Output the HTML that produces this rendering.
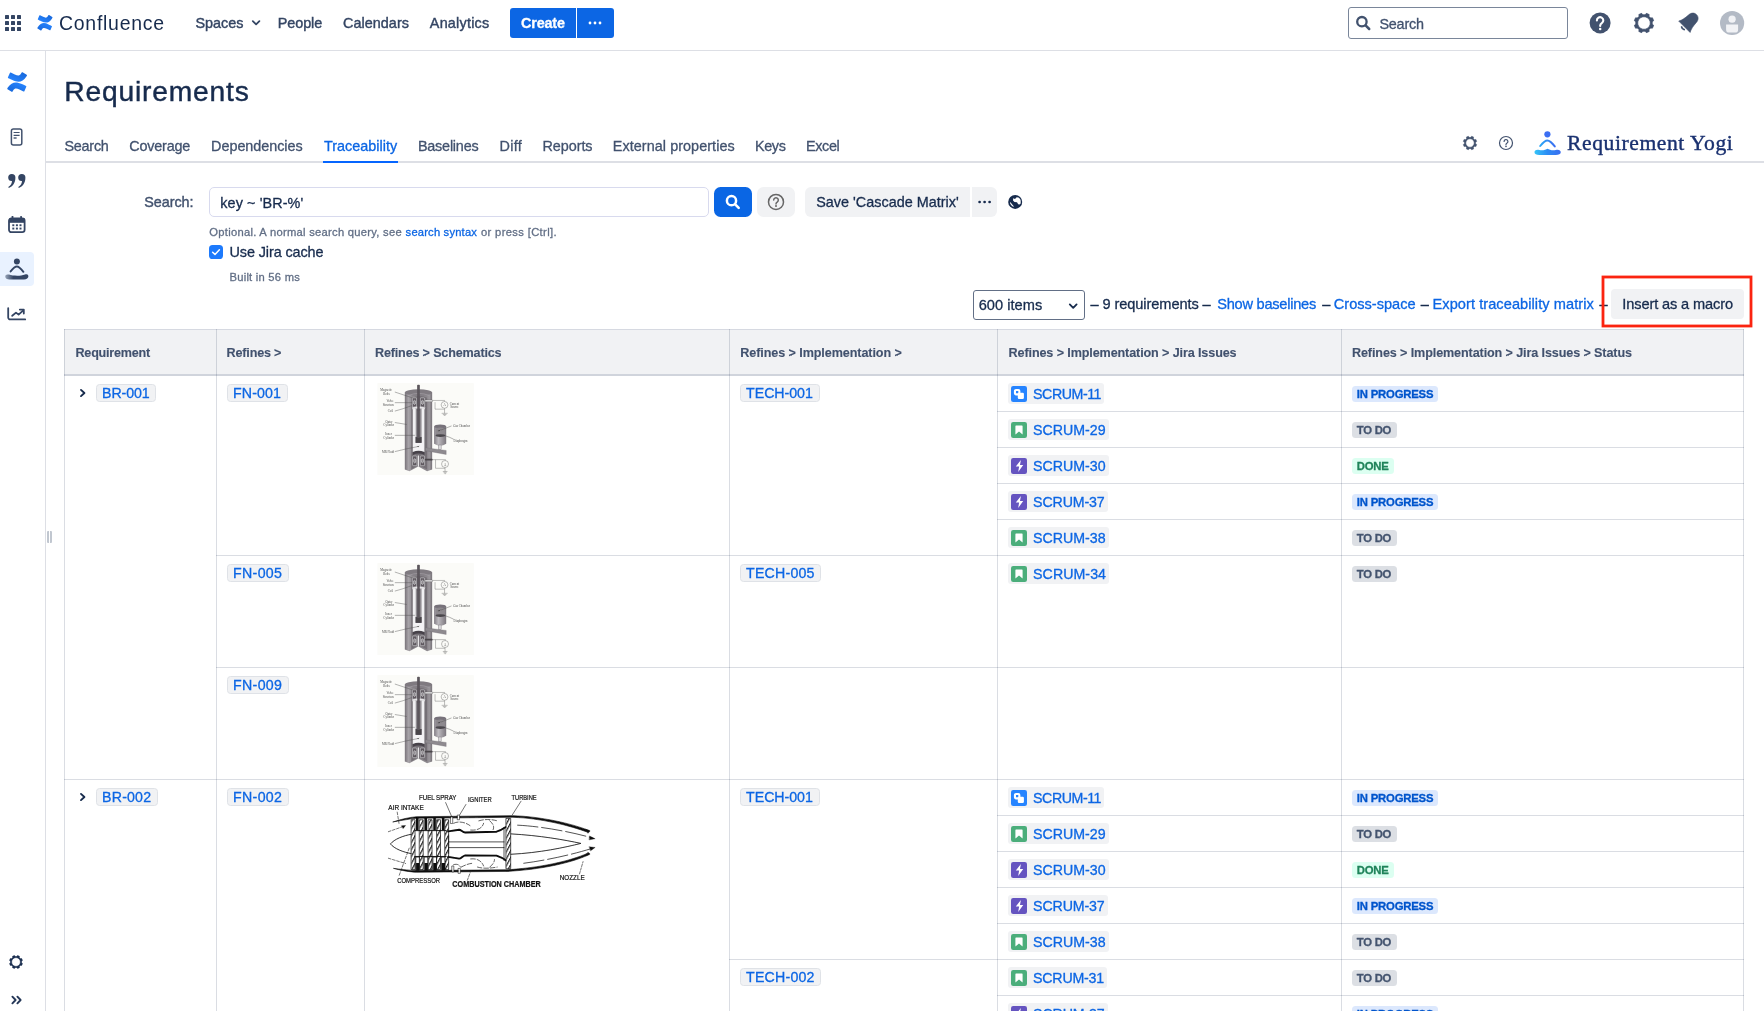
<!DOCTYPE html>
<html>
<head>
<meta charset="utf-8">
<title>Requirements</title>
<style>
*{box-sizing:border-box;margin:0;padding:0}
html,body{width:1764px;height:1011px;overflow:hidden;background:#fff}
body{font-family:"Liberation Sans",sans-serif;color:#172b4d;font-size:14px;position:relative}
.abs{position:absolute;white-space:nowrap;-webkit-text-stroke:0.3px currentColor}
.st{-webkit-text-stroke:0.4px currentColor}
#topnav{position:absolute;left:0;top:0;width:1764px;height:51px;border-bottom:1px solid #dddfe5;background:#fff}
#create{position:absolute;left:510px;top:8px;width:66px;height:30px;background:#0c66e4;border-radius:3px 0 0 3px}
#createmore{position:absolute;left:577px;top:8px;width:37px;height:30px;background:#0c66e4;border-radius:0 3px 3px 0}
#searchbox{position:absolute;left:1348px;top:7px;width:220px;height:32px;border:1px solid #7a869a;border-radius:3px;background:#fff}
#sidebar{position:absolute;left:0;top:51px;width:46px;height:960px;border-right:1px solid #dddfe5;background:#fff}
#resize{position:absolute;left:47px;top:531.4px;width:4.8px;height:11.2px;background:linear-gradient(90deg,#c1c7d0 0,#c1c7d0 1.6px,transparent 1.6px,transparent 3.2px,#c1c7d0 3.2px,#c1c7d0 4.8px);border-radius:1px}
#tabline{position:absolute;left:46px;top:161px;width:1718px;height:2px;background:#dddfe5}
#tabactive{position:absolute;left:323px;top:161px;width:75px;height:2px;background:#0565ff}
#q{position:absolute;left:209px;top:187px;width:500px;height:30px;border:1px solid #d8daee;border-radius:5px;background:#fff}
.btn{position:absolute;top:187px;height:30px;background:#f1f2f4}
#cb{position:absolute;left:209px;top:245px;width:14px;height:14px;border-radius:3.6px;background:#1d7afc}
#cb svg{display:block}
#sel{position:absolute;left:973px;top:290px;width:112px;height:30px;border:1px solid #626f86;border-radius:3px;background:#fff}
#macro{position:absolute;left:1611px;top:289px;width:133px;height:30px;background:#f1f2f4;border-radius:4px}
#redbox{position:absolute;left:1601.5px;top:275.5px;width:151px;height:51.5px;border:2.5px solid #f5301c}
#thead{position:absolute;left:64px;top:329px;width:1680px;height:47px;background:#f1f2f4;border-top:1px solid #d6d9e1;border-bottom:2px solid #d0d4dc}
.vl{position:absolute;width:1px;background:rgba(9,30,66,0.15)}
.hl{position:absolute;height:1px;background:rgba(9,30,66,0.15)}
.key{position:absolute;height:18px;border:1px solid #dfe2e7;background:#f1f2f4;border-radius:3.5px}
.jira{position:absolute;height:21px;background:#f1f2f4;border-radius:3px}
.loz{position:absolute;height:16px;border-radius:3.5px}
.ip{background:#dce8fd}
.td{background:#dcdfe4}
.dn{background:#dcfff1}
</style>
</head>
<body>
<div id="root" style="position:absolute;left:0;top:0;width:1764px;height:1011px;will-change:transform">
<div id="topnav"></div>
<svg class="abs" style="left:0;top:0" width="30" height="50"><rect x="5" y="15" width="4" height="4" rx="0.6" fill="#344563"/><rect x="11" y="15" width="4" height="4" rx="0.6" fill="#344563"/><rect x="17" y="15" width="4" height="4" rx="0.6" fill="#344563"/><rect x="5" y="21" width="4" height="4" rx="0.6" fill="#344563"/><rect x="11" y="21" width="4" height="4" rx="0.6" fill="#344563"/><rect x="17" y="21" width="4" height="4" rx="0.6" fill="#344563"/><rect x="5" y="27" width="4" height="4" rx="0.6" fill="#344563"/><rect x="11" y="27" width="4" height="4" rx="0.6" fill="#344563"/><rect x="17" y="27" width="4" height="4" rx="0.6" fill="#344563"/></svg>
<div class="abs" style="left:59.30px;top:12px;font-size:20.3px;line-height:22px;letter-spacing:0.761px;color:#172b4d;transform:scaleX(0.96);transform-origin:0 0;-webkit-text-stroke:0;">Confluence</div>
<div class="abs st" style="left:195.40px;top:15px;font-size:14.4px;line-height:16px;letter-spacing:-0.005px;color:#344563;">Spaces</div>
<div class="abs st" style="left:277.80px;top:15px;font-size:14.4px;line-height:16px;letter-spacing:-0.090px;color:#344563;">People</div>
<div class="abs st" style="left:343.00px;top:15px;font-size:14.4px;line-height:16px;letter-spacing:0.040px;color:#344563;">Calendars</div>
<div class="abs st" style="left:429.80px;top:15px;font-size:14.4px;line-height:16px;letter-spacing:0.231px;color:#344563;">Analytics</div>
<div id="create"></div><div id="createmore"></div>
<div class="abs" style="left:521.00px;top:15px;font-size:14.4px;line-height:16px;letter-spacing:-0.171px;color:#fff;font-weight:bold;">Create</div>
<div id="searchbox"></div>
<svg class="abs" style="left:0;top:0;overflow:visible" width="1" height="1"><defs><linearGradient id="c1a" x1="0.9" y1="0.1" x2="0.2" y2="0.9"><stop offset="0" stop-color="#1868db"/><stop offset="1" stop-color="#2684ff"/></linearGradient><linearGradient id="c1b" x1="0.1" y1="0.9" x2="0.8" y2="0.1"><stop offset="0" stop-color="#1868db"/><stop offset="1" stop-color="#2684ff"/></linearGradient></defs><g transform="translate(35.09 12.74) scale(0.8172 0.8387)"><path d="M3.43 16.98c-.2.33-.43.72-.61 1a.62.62 0 0 0 .2.85l3.84 2.36a.62.62 0 0 0 .85-.2c.15-.26.36-.6.58-.96 1.54-2.53 3.1-2.22 5.89-.9l3.8 1.8a.62.62 0 0 0 .83-.3l1.83-4.12a.62.62 0 0 0-.31-.81c-.8-.38-2.4-1.13-3.84-1.82-5.19-2.5-9.58-2.34-13.06 3.1z" fill="url(#c1b)"/><path d="M20.57 7.04c.2-.33.43-.72.62-1a.62.62 0 0 0-.2-.85L17.14 2.83a.62.62 0 0 0-.86.2c-.15.26-.36.6-.58.96-1.54 2.53-3.08 2.22-5.88.9L6.04 3.1a.62.62 0 0 0-.83.3L3.38 7.52a.62.62 0 0 0 .31.81c.8.38 2.4 1.13 3.84 1.82 5.18 2.49 9.57 2.33 13.04-3.11z" fill="url(#c1a)"/></g></svg>
<svg class="abs" style="left:250px;top:18px" width="12" height="10"><path d="M2.8 3.1 L6.1 6.4 L9.4 3.1" fill="none" stroke="#344563" stroke-width="1.8" stroke-linecap="round" stroke-linejoin="round"/></svg>
<svg class="abs" style="left:577px;top:8px" width="37" height="30"><circle cx="13" cy="15" r="1.4" fill="#fff"/><circle cx="18" cy="15" r="1.4" fill="#fff"/><circle cx="23" cy="15" r="1.4" fill="#fff"/></svg>
<svg class="abs" style="left:1354px;top:14px" width="20" height="20"><circle cx="7.9" cy="7.7" r="4.7" fill="none" stroke="#42526e" stroke-width="2.3"/><path d="M11.6 11.4 L15.2 15" stroke="#42526e" stroke-width="2.5" stroke-linecap="round"/></svg>
<svg class="abs" style="left:1588px;top:11px" width="24" height="24"><circle cx="12.1" cy="11.9" r="10.5" fill="#42526e"/><path d="M8.9 9.4 a3.2 3.2 0 1 1 4.9 2.7 c-1 .65 -1.6 1.2 -1.6 2.4 v.5" fill="none" stroke="#fff" stroke-width="2.1" stroke-linecap="round"/><circle cx="12.2" cy="18" r="1.25" fill="#fff"/></svg>
<svg class="abs" style="left:1632px;top:11px" width="24" height="24"><path d="M13.30 3.80 L14.31 2.37 L17.17 3.56 L16.88 5.29 L18.71 7.12 L20.44 6.83 L21.63 9.69 L20.20 10.70 L20.20 13.30 L21.63 14.31 L20.44 17.17 L18.71 16.88 L16.88 18.71 L17.17 20.44 L14.31 21.63 L13.30 20.20 L10.70 20.20 L9.69 21.63 L6.83 20.44 L7.12 18.71 L5.29 16.88 L3.56 17.17 L2.37 14.31 L3.80 13.30 L3.80 10.70 L2.37 9.69 L3.56 6.83 L5.29 7.12 L7.12 5.29 L6.83 3.56 L9.69 2.37 L10.70 3.80Z M12 5.7 a6.3 6.3 0 1 0 0.001 0z" fill="#42526e" fill-rule="evenodd" stroke="#42526e" stroke-width="0.8" stroke-linejoin="round"/></svg>
<svg class="abs" style="left:1674px;top:8px" width="30" height="30"><g transform="translate(15.9 13.3) rotate(45) scale(0.97)"><path d="M-8.3 8 L8.3 8 C6.6 5 5.8 1 5.6 -3.5 C5.4 -7.6 2.9 -9.7 0 -9.7 C-2.9 -9.7 -5.4 -7.6 -5.6 -3.5 C-5.8 1 -6.6 5 -8.3 8 Z" fill="#42526e" stroke="#42526e" stroke-width="0.6" stroke-linejoin="round"/><path d="M-1.9 10.2 Q0 11.6 1.9 10.2" fill="none" stroke="#42526e" stroke-width="1.8" stroke-linecap="round"/></g></svg>
<svg class="abs" style="left:1719px;top:10px" width="26" height="26"><defs><clipPath id="avc"><circle cx="13.1" cy="13" r="12.1"/></clipPath></defs><circle cx="13.1" cy="13" r="12.1" fill="#b3bac5"/><circle cx="13.1" cy="9.2" r="3.6" fill="#f1f2f5"/><path d="M7.1 14.4 h12 v5 a3.2 3.2 0 0 1 -3.2 3.2 h-5.6 a3.2 3.2 0 0 1 -3.2 -3.2z" fill="#f1f2f5"/></svg>
<div class="abs" style="left:1379.40px;top:16px;font-size:14.4px;line-height:16px;letter-spacing:-0.188px;color:#42526e;">Search</div>
<div id="sidebar"></div><div id="resize"></div>
<svg class="abs" style="left:0;top:0;overflow:visible" width="1" height="1"><defs><linearGradient id="c2a" x1="0.9" y1="0.1" x2="0.2" y2="0.9"><stop offset="0" stop-color="#1868db"/><stop offset="1" stop-color="#2684ff"/></linearGradient><linearGradient id="c2b" x1="0.1" y1="0.9" x2="0.8" y2="0.1"><stop offset="0" stop-color="#1868db"/><stop offset="1" stop-color="#2684ff"/></linearGradient></defs><g transform="translate(4.33 69.34) scale(1.0645 1.0591)"><path d="M3.43 16.98c-.2.33-.43.72-.61 1a.62.62 0 0 0 .2.85l3.84 2.36a.62.62 0 0 0 .85-.2c.15-.26.36-.6.58-.96 1.54-2.53 3.1-2.22 5.89-.9l3.8 1.8a.62.62 0 0 0 .83-.3l1.83-4.12a.62.62 0 0 0-.31-.81c-.8-.38-2.4-1.13-3.84-1.82-5.19-2.5-9.58-2.34-13.06 3.1z" fill="url(#c2b)"/><path d="M20.57 7.04c.2-.33.43-.72.62-1a.62.62 0 0 0-.2-.85L17.14 2.83a.62.62 0 0 0-.86.2c-.15.26-.36.6-.58.96-1.54 2.53-3.08 2.22-5.88.9L6.04 3.1a.62.62 0 0 0-.83.3L3.38 7.52a.62.62 0 0 0 .31.81c.8.38 2.4 1.13 3.84 1.82 5.18 2.49 9.57 2.33 13.04-3.11z" fill="url(#c2a)"/></g></svg>
<svg class="abs" style="left:8px;top:126px" width="18" height="22"><rect x="3.4" y="3" width="10.4" height="16" rx="2" fill="none" stroke="#42526e" stroke-width="1.5"/><path d="M5.6 6.5 h6 M5.6 9.3 h6" stroke="#42526e" stroke-width="1.2"/><path d="M5.6 12 h3" stroke="#42526e" stroke-width="1.4"/></svg>
<svg class="abs" style="left:4px;top:170px;overflow:visible" width="26" height="22"><g transform="translate(0 7.5)" fill="#344563"><path d="M4.2 0 a3.6 3.6 0 1 1 7.2 0 c0 5.4 -2.6 9 -6.6 10.5 l-0.5 -0.9 c2.4 -1.5 3.6 -3.6 3.7 -6.1 a3.6 3.6 0 0 1 -3.8 -3.5z"/><path d="M14.2 0 a3.6 3.6 0 1 1 7.2 0 c0 5.4 -2.6 9 -6.6 10.5 l-0.5 -0.9 c2.4 -1.5 3.6 -3.6 3.7 -6.1 a3.6 3.6 0 0 1 -3.8 -3.5z"/></g></svg>
<svg class="abs" style="left:7.8px;top:216.3px" width="19" height="19"><rect x="1" y="2.4" width="15.6" height="13.8" rx="2.4" fill="none" stroke="#344563" stroke-width="1.8"/><rect x="1" y="2.4" width="15.6" height="4.4" fill="#344563"/><rect x="3.6" y="0" width="1.8" height="3.4" rx="0.6" fill="#344563"/><rect x="12.2" y="0" width="1.8" height="3.4" rx="0.6" fill="#344563"/><rect x="4.3" y="8.3" width="2" height="1.9" fill="#344563"/><rect x="7.9" y="8.3" width="2" height="1.9" fill="#344563"/><rect x="11.5" y="8.3" width="2" height="1.9" fill="#344563"/><rect x="4.3" y="11.6" width="2" height="1.9" fill="#344563"/><rect x="7.9" y="11.6" width="2" height="1.9" fill="#344563"/><rect x="11.5" y="11.6" width="2" height="1.9" fill="#344563"/></svg>
<div class="abs" style="left:0;top:252px;width:34px;height:34px;background:#e9f2ff;border-radius:0 4px 4px 0"></div>
<svg class="abs" style="left:3px;top:256px;overflow:visible" width="28" height="26"><defs><linearGradient id="yg1" x1="0" x2="1"><stop offset="0" stop-color="#344563" stop-opacity="0.45"/><stop offset="0.35" stop-color="#344563"/><stop offset="1" stop-color="#344563"/></linearGradient></defs><circle cx="13.9" cy="5.4" r="3" fill="#344563"/><path d="M7.6 15.4 Q11.6 10.6 13.9 10.6 Q16.2 10.6 20.4 15.8" fill="none" stroke="#344563" stroke-width="2" stroke-linecap="round"/><path d="M2.2 20.4 C2.2 18.6 4 18 6 18.6 C10 20 17 20.4 22 18.6 C24 17.9 25.4 18.6 25.4 20.3 C25.4 22.4 23.6 23.4 21 23.4 H6.6 C4 23.4 2.2 22.4 2.2 20.4Z" fill="url(#yg1)"/></svg>
<svg class="abs" style="left:6px;top:306px" width="22" height="16"><path d="M2.2 2.2 V11.4 a2 2 0 0 0 2 2 H19.2" fill="none" stroke="#344563" stroke-width="1.8" stroke-linecap="round"/><path d="M6.2 9.8 L10 6.6 L12.6 8.6 L17 4.6" fill="none" stroke="#344563" stroke-width="1.8" stroke-linecap="round" stroke-linejoin="round"/><path d="M13.8 3.6 H17.8 V7.6" fill="none" stroke="#344563" stroke-width="1.8" stroke-linecap="round" stroke-linejoin="round"/></svg>
<svg class="abs" style="left:7.45px;top:952.85px" width="18" height="18"><path d="M9.88 3.47 L10.54 2.58 L12.45 3.37 L12.29 4.47 L13.53 5.71 L14.63 5.55 L15.42 7.46 L14.53 8.12 L14.53 9.88 L15.42 10.54 L14.63 12.45 L13.53 12.29 L12.29 13.53 L12.45 14.63 L10.54 15.42 L9.88 14.53 L8.12 14.53 L7.46 15.42 L5.55 14.63 L5.71 13.53 L4.47 12.29 L3.37 12.45 L2.58 10.54 L3.47 9.88 L3.47 8.12 L2.58 7.46 L3.37 5.55 L4.47 5.71 L5.71 4.47 L5.55 3.37 L7.46 2.58 L8.12 3.47Z M9 4.6 a4.4 4.4 0 1 0 0.001 0z" fill="#172b4d" fill-rule="evenodd" stroke="#172b4d" stroke-width="0.6" stroke-linejoin="round"/></svg>
<svg class="abs" style="left:10px;top:994px" width="14" height="12"><path d="M2.4 2.7 L5.6 6 L2.4 9.3 M7.4 2.7 L10.6 6 L7.4 9.3" fill="none" stroke="#253858" stroke-width="1.9" stroke-linecap="round" stroke-linejoin="round"/></svg>
<div class="abs" style="left:64.30px;top:75px;font-size:28.2px;line-height:32px;letter-spacing:0.821px;color:#172b4d;-webkit-text-stroke:0.45px #172b4d;">Requirements</div>
<div id="tabline"></div><div id="tabactive"></div>
<div class="abs" style="left:64.50px;top:138px;font-size:14.4px;line-height:16px;letter-spacing:-0.254px;color:#42526e;">Search</div>
<div class="abs" style="left:129.30px;top:138px;font-size:14.4px;line-height:16px;letter-spacing:-0.192px;color:#42526e;">Coverage</div>
<div class="abs" style="left:211.10px;top:138px;font-size:14.4px;line-height:16px;letter-spacing:-0.039px;color:#42526e;">Dependencies</div>
<div class="abs" style="left:323.90px;top:138px;font-size:14.4px;line-height:16px;letter-spacing:0.017px;color:#0c66e4;">Traceability</div>
<div class="abs" style="left:417.90px;top:138px;font-size:14.4px;line-height:16px;letter-spacing:-0.204px;color:#42526e;">Baselines</div>
<div class="abs" style="left:499.50px;top:138px;font-size:14.4px;line-height:16px;letter-spacing:0.290px;color:#42526e;">Diff</div>
<div class="abs" style="left:542.50px;top:138px;font-size:14.4px;line-height:16px;letter-spacing:-0.060px;color:#42526e;">Reports</div>
<div class="abs" style="left:612.80px;top:138px;font-size:14.4px;line-height:16px;letter-spacing:0.060px;color:#42526e;">External properties</div>
<div class="abs" style="left:755.00px;top:138px;font-size:14.4px;line-height:16px;letter-spacing:-0.378px;color:#42526e;">Keys</div>
<div class="abs" style="left:806.00px;top:138px;font-size:14.4px;line-height:16px;letter-spacing:-0.343px;color:#42526e;">Excel</div>
<div class="abs" style="left:1567.00px;top:131px;font-size:21.6px;line-height:24px;letter-spacing:0.575px;color:#1a3170;font-family:Liberation Serif,serif;-webkit-text-stroke:0.4px #1a3170;">Requirement Yogi</div>
<div class="abs st" style="left:144.20px;top:194px;font-size:14.4px;line-height:16px;letter-spacing:-0.032px;color:#42526e;">Search:</div>
<div id="q"></div>
<div class="abs" style="left:220.30px;top:195px;font-size:14.4px;line-height:16px;letter-spacing:0.098px;color:#172b4d;">key ~ &#x27;BR-%&#x27;</div>
<div class="btn" style="left:714px;width:38px;background:#0a66e4;border-radius:6.5px"></div>
<div class="btn" style="left:757px;width:38px;border-radius:6.5px"></div>
<div class="btn" style="left:805px;width:165px;border-radius:6px 0 0 6px"></div>
<div class="btn" style="left:972px;width:25px;border-radius:0 6px 6px 0"></div>
<svg class="abs" style="left:1462px;top:135.2px" width="16" height="16"><path d="M8.89 2.37 L9.61 1.29 L11.61 2.12 L11.35 3.39 L12.61 4.65 L13.88 4.39 L14.71 6.39 L13.63 7.11 L13.63 8.89 L14.71 9.61 L13.88 11.61 L12.61 11.35 L11.35 12.61 L11.61 13.88 L9.61 14.71 L8.89 13.63 L7.11 13.63 L6.39 14.71 L4.39 13.88 L4.65 12.61 L3.39 11.35 L2.12 11.61 L1.29 9.61 L2.37 8.89 L2.37 7.11 L1.29 6.39 L2.12 4.39 L3.39 4.65 L4.65 3.39 L4.39 2.12 L6.39 1.29 L7.11 2.37Z M8 3.8 a4.2 4.2 0 1 0 0.001 0z" fill="#42526e" fill-rule="evenodd" stroke="#42526e" stroke-width="0.5" stroke-linejoin="round"/></svg>
<svg class="abs" style="left:1498px;top:135.2px" width="16" height="16"><circle cx="8" cy="8" r="6.5" fill="none" stroke="#42526e" stroke-width="1.2"/><path d="M6.1 6.5 a1.9 1.9 0 1 1 2.9 1.6 c-.7 .4 -1 .8 -1 1.5" fill="none" stroke="#42526e" stroke-width="1.2" stroke-linecap="round"/><circle cx="8" cy="11.4" r="0.8" fill="#42526e"/></svg>
<svg class="abs" style="left:1532px;top:129px;overflow:visible" width="32" height="28"><defs><linearGradient id="yl" x1="0" x2="1"><stop offset="0" stop-color="#35c4f8"/><stop offset="0.5" stop-color="#2c8cf4"/><stop offset="1" stop-color="#3a6df0"/></linearGradient><linearGradient id="ya" x1="0" x2="1"><stop offset="0" stop-color="#2aa6f6"/><stop offset="1" stop-color="#3a6df0"/></linearGradient></defs><circle cx="15.4" cy="5.3" r="3.1" fill="#3b6ef2"/><path d="M8.2 17 Q12.6 11.4 15.4 11.4 Q18.2 11.4 22.8 17.4" fill="none" stroke="url(#ya)" stroke-width="2" stroke-linecap="round"/><path d="M2.49 23.17 C2.49 21.33 4.32 20.23 7.26 20.96 C10.94 22.07 13.70 20.41 15.54 19.68 C17.37 20.41 20.13 22.07 23.81 20.96 C26.75 20.23 28.77 21.33 28.77 23.17 C28.77 25.01 26.75 25.93 23.81 25.93 L7.26 25.93 C4.32 25.93 2.49 25.01 2.49 23.17Z" fill="url(#yl)"/></svg>
<svg class="abs" style="left:723px;top:192px" width="20" height="20"><circle cx="8.5" cy="8.7" r="4.6" fill="none" stroke="#fff" stroke-width="2.5"/><path d="M12.2 12.4 L15.7 15.9" stroke="#fff" stroke-width="2.6" stroke-linecap="round"/></svg>
<svg class="abs" style="left:766px;top:192px" width="20" height="20"><circle cx="10" cy="9.9" r="7.5" fill="none" stroke="#666" stroke-width="1.5"/><path d="M7.7 8.1 a2.3 2.3 0 1 1 3.5 2 c-.8 .5 -1.2 1 -1.2 1.9" fill="none" stroke="#666" stroke-width="1.5" stroke-linecap="round"/><circle cx="10" cy="14" r="1" fill="#666"/></svg>
<svg class="abs" style="left:972px;top:187px" width="25" height="30"><circle cx="7.6" cy="15" r="1.35" fill="#172b4d"/><circle cx="12.6" cy="15" r="1.35" fill="#172b4d"/><circle cx="17.6" cy="15" r="1.35" fill="#172b4d"/></svg>
<svg class="abs" style="left:1007px;top:194px" width="16" height="16"><circle cx="8.2" cy="7.9" r="7" fill="#172b4d"/><path d="M6.2 4.3 L8 4.9 L9.7 3.2 L11.5 3.5 C12.8 4.3 13.6 5.5 13.7 6.7 L13.7 9.6 L12 10.7 L10.7 9.5 L10 8.3 L7.5 8 L6 6.5 Z" fill="#fff"/><path d="M2.9 7.8 L4.25 9.15 L7.2 12.8 L5.15 12.3 L3.35 10.05 Z" fill="#fff"/></svg>
<div class="abs" style="left:816.20px;top:194px;font-size:14.4px;line-height:16px;letter-spacing:0.016px;color:#172b4d;">Save &#x27;Cascade Matrix&#x27;</div>
<div class="abs" style="left:209.30px;top:226px;font-size:11.2px;line-height:12px;letter-spacing:0.280px;color:#626f86;">Optional. A normal search query, see </div>
<div class="abs" style="left:405.60px;top:226px;font-size:11.2px;line-height:12px;letter-spacing:0.192px;color:#0c66e4;">search syntax</div>
<div class="abs" style="left:481.00px;top:226px;font-size:11.2px;line-height:12px;letter-spacing:0.355px;color:#626f86;">or press [Ctrl].</div>
<div id="cb"><svg width="14" height="14" viewBox="0 0 14 14"><path d="M3.6 7.2 L6 9.4 L10.4 4.8" fill="none" stroke="#fff" stroke-width="1.5" stroke-linecap="round" stroke-linejoin="round"/></svg></div>
<div class="abs" style="left:229.50px;top:244px;font-size:14.4px;line-height:16px;letter-spacing:-0.088px;color:#172b4d;">Use Jira cache</div>
<div class="abs" style="left:229.50px;top:271px;font-size:11.2px;line-height:12px;letter-spacing:0.241px;color:#626f86;">Built in 56 ms</div>
<div id="sel"></div>
<div class="abs" style="left:978.70px;top:297px;font-size:14.6px;line-height:16px;letter-spacing:0.034px;color:#172b4d;">600 items</div>
<svg class="abs" style="left:1067px;top:301px" width="12" height="10"><path d="M2.8 3.4 L6.2 6.9 L9.6 3.4" fill="none" stroke="#172b4d" stroke-width="1.8" stroke-linecap="round" stroke-linejoin="round"/></svg>
<div class="abs" style="left:1090.50px;top:296px;font-size:14.6px;line-height:16px;letter-spacing:-0.085px;color:#172b4d;">– 9 requirements –</div>
<div class="abs" style="left:1217.20px;top:296px;font-size:14.6px;line-height:16px;letter-spacing:-0.247px;color:#0c66e4;">Show baselines</div>
<div class="abs" style="left:1322.20px;top:296px;font-size:14.6px;line-height:16px;color:#172b4d;">–</div>
<div class="abs" style="left:1333.80px;top:296px;font-size:14.6px;line-height:16px;letter-spacing:-0.013px;color:#0c66e4;">Cross-space</div>
<div class="abs" style="left:1420.70px;top:296px;font-size:14.6px;line-height:16px;color:#172b4d;">–</div>
<div class="abs" style="left:1432.50px;top:296px;font-size:14.6px;line-height:16px;letter-spacing:0.060px;color:#0c66e4;">Export traceability matrix</div>
<div class="abs" style="left:1599.60px;top:296px;font-size:14.6px;line-height:16px;color:#172b4d;">–</div>
<div id="macro"></div><svg class="abs" style="left:1598px;top:272px" width="160" height="60"><rect x="5" y="5" width="148" height="49" fill="none" stroke="#fb2410" stroke-width="2.8"/></svg>
<div class="abs" style="left:1622.30px;top:296px;font-size:14.6px;line-height:16px;letter-spacing:-0.123px;color:#172b4d;">Insert as a macro</div>
<div id="thead"></div>
<div class="vl" style="left:64px;top:329px;height:682px"></div><div class="vl" style="left:216px;top:329px;height:682px"></div><div class="vl" style="left:364px;top:329px;height:682px"></div><div class="vl" style="left:729px;top:329px;height:682px"></div><div class="vl" style="left:997px;top:329px;height:682px"></div><div class="vl" style="left:1341px;top:329px;height:682px"></div><div class="vl" style="left:1743px;top:329px;height:682px"></div>
<div class="hl" style="left:997px;top:411px;width:747px"></div><div class="hl" style="left:997px;top:447px;width:747px"></div><div class="hl" style="left:997px;top:483px;width:747px"></div><div class="hl" style="left:997px;top:519px;width:747px"></div><div class="hl" style="left:216px;top:555px;width:1528px"></div><div class="hl" style="left:216px;top:667px;width:1528px"></div><div class="hl" style="left:64px;top:779px;width:1680px"></div><div class="hl" style="left:997px;top:815px;width:747px"></div><div class="hl" style="left:997px;top:851px;width:747px"></div><div class="hl" style="left:997px;top:887px;width:747px"></div><div class="hl" style="left:997px;top:923px;width:747px"></div><div class="hl" style="left:729px;top:959px;width:1015px"></div><div class="hl" style="left:997px;top:995px;width:747px"></div>
<div class="abs" style="left:75.50px;top:346px;font-size:12.6px;line-height:14px;letter-spacing:-0.229px;color:#42526e;font-weight:bold;-webkit-text-stroke:0.12px #42526e;">Requirement</div>
<div class="abs" style="left:226.60px;top:346px;font-size:12.6px;line-height:14px;letter-spacing:-0.186px;color:#42526e;font-weight:bold;-webkit-text-stroke:0.12px #42526e;">Refines &gt;</div>
<div class="abs" style="left:375.00px;top:346px;font-size:12.6px;line-height:14px;letter-spacing:-0.171px;color:#42526e;font-weight:bold;-webkit-text-stroke:0.12px #42526e;">Refines &gt; Schematics</div>
<div class="abs" style="left:740.30px;top:346px;font-size:12.6px;line-height:14px;letter-spacing:-0.090px;color:#42526e;font-weight:bold;-webkit-text-stroke:0.12px #42526e;">Refines &gt; Implementation &gt;</div>
<div class="abs" style="left:1008.60px;top:346px;font-size:12.6px;line-height:14px;letter-spacing:-0.118px;color:#42526e;font-weight:bold;-webkit-text-stroke:0.12px #42526e;">Refines &gt; Implementation &gt; Jira Issues</div>
<div class="abs" style="left:1352.00px;top:346px;font-size:12.6px;line-height:14px;letter-spacing:-0.114px;color:#42526e;font-weight:bold;-webkit-text-stroke:0.12px #42526e;">Refines &gt; Implementation &gt; Jira Issues &gt; Status</div>
<svg class="abs" style="left:79.4px;top:387.7px" width="8" height="10"><path d="M2 1.9 L5.4 5 L2 8.1" fill="none" stroke="#172b4d" stroke-width="1.9" stroke-linecap="round" stroke-linejoin="round"/></svg><div class="key" style="left:96px;top:384px;width:60.1px"></div><div class="abs" style="left:102.10px;top:385px;font-size:14.2px;line-height:16px;letter-spacing:-0.125px;color:#0c66e4;">BR-001</div>
<div class="key" style="left:227px;top:384px;width:60.5px"></div><div class="abs" style="left:233.10px;top:385px;font-size:14.2px;line-height:16px;letter-spacing:0.075px;color:#0c66e4;">FN-001</div>
<div class="abs" style="left:377px;top:383px;width:97px;height:92px"><svg width="97" height="92" viewBox="0 0 97 92" style="display:block"><defs><linearGradient id="sg1_0" x1="0" x2="1"><stop offset="0" stop-color="#787379"/><stop offset="0.13" stop-color="#a7a3a8"/><stop offset="0.28" stop-color="#8e8a8f"/><stop offset="0.8" stop-color="#8c888d"/><stop offset="0.9" stop-color="#9a969b"/><stop offset="1" stop-color="#777278"/></linearGradient><linearGradient id="sg2_0" x1="0" x2="1"><stop offset="0" stop-color="#827d84"/><stop offset="0.35" stop-color="#bebbc0"/><stop offset="1" stop-color="#7c777e"/></linearGradient><filter id="sbl_0" x="-5%" y="-5%" width="110%" height="110%"><feGaussianBlur stdDeviation="0.38"/></filter></defs><g><rect x="0.4" y="0.1" width="96.4" height="91.9" fill="#fbfbf8"/><g filter="url(#sbl_0)"><path d="M27.82 9.50 L27.82 86.53 L32.38 88.28 L41.29 83.43 L50.11 88.28 L55.15 86.53 L55.15 9.50 Z" fill="url(#sg1_0)"/><ellipse cx="41.49" cy="9.50" rx="13.66" ry="3.29" fill="#7f7a80"/><path d="M34.31 15.31 Q41.49 10.47 50.11 14.83 L50.11 86.53 L41.29 82.17 L34.31 86.53Z" fill="#757076"/><path d="M31.41 12.40 Q41.49 8.53 52.24 12.40" fill="none" stroke="#a5a1a6" stroke-width="0.7"/><rect x="35.77" y="25.97" width="3.10" height="43.12" fill="#f1f0f2"/><rect x="44.30" y="25.97" width="3.10" height="43.12" fill="#f1f0f2"/><rect x="38.87" y="25.97" width="5.43" height="29.07" fill="#8f8b90"/><rect x="37.22" y="59.69" width="9.21" height="9.40" fill="#f4f3f5"/><path d="M39.64 63.57 L42.55 62.79 L41.10 64.24Z" fill="#444"/><rect x="38.48" y="54.07" width="6.20" height="5.81" fill="#48444a"/><rect x="40.13" y="1.74" width="2.71" height="53.29" rx="0.8" fill="#5b565c"/><rect x="35.38" y="14.83" width="4.26" height="9.21" rx="0.8" fill="#5e595f" stroke="#e9e8ea" stroke-width="0.5"/><ellipse cx="37.51" cy="19.38" rx="1.07" ry="2.13" fill="#8b878c" stroke="#f1f0f2" stroke-width="0.5"/><rect x="43.33" y="14.83" width="4.26" height="9.21" rx="0.8" fill="#5e595f" stroke="#e9e8ea" stroke-width="0.5"/><ellipse cx="45.46" cy="19.38" rx="1.07" ry="2.13" fill="#8b878c" stroke="#f1f0f2" stroke-width="0.5"/><path d="M34.80 24.52 Q41.49 22.58 48.37 24.52 L47.40 26.45 Q41.49 24.52 35.77 26.45Z" fill="#e4e3e5"/><rect x="40.23" y="13.37" width="2.52" height="14.53" fill="#5b565c"/><rect x="47.88" y="16.96" width="7.75" height="1.74" rx="0.6" fill="#e8e7e9" stroke="#555" stroke-width="0.35"/><path d="M35.77 69.09 Q41.49 66.18 47.40 69.09 L47.40 72.00 Q41.49 69.09 35.77 72.00Z" fill="#47434a"/><rect x="35.57" y="72.97" width="4.26" height="9.69" rx="0.8" fill="#5e595f" stroke="#e9e8ea" stroke-width="0.5"/><ellipse cx="37.71" cy="77.81" rx="1.07" ry="2.13" fill="#8b878c" stroke="#f1f0f2" stroke-width="0.5"/><rect x="43.33" y="72.97" width="4.26" height="9.69" rx="0.8" fill="#5e595f" stroke="#e9e8ea" stroke-width="0.5"/><ellipse cx="45.46" cy="77.81" rx="1.07" ry="2.13" fill="#8b878c" stroke="#f1f0f2" stroke-width="0.5"/><rect x="40.81" y="72.48" width="1.16" height="11.14" fill="#e9e8ea"/><rect x="47.88" y="75.87" width="7.75" height="1.55" rx="0.6" fill="#48444a"/><path d="M57.09 43.41 L57.09 60.85 Q63.19 64.73 69.20 60.85 L69.20 43.41Z" fill="url(#sg2_0)"/><ellipse cx="63.19" cy="43.41" rx="6.06" ry="1.94" fill="#77727a"/><path d="M59.02 45.35 L59.02 52.62 L67.74 52.62 L67.74 45.35 Q63.19 43.41 59.02 45.35Z" fill="#8d898e"/><ellipse cx="63.38" cy="52.62" rx="4.84" ry="1.26" fill="#4a464c"/><path d="M60.48 48.06 L63.87 46.51 L62.12 48.26Z" fill="#333"/><rect x="61.25" y="62.02" width="2.91" height="4.36" fill="#d9d8da" stroke="#77727a" stroke-width="0.4"/><path d="M48.37 64.73 L69.20 67.44 L69.20 71.51 L48.37 67.64Z" fill="#8e8a8f" stroke="#6b666c" stroke-width="0.3"/><path d="M55.63 17.44 H67.55 V18.70 M58.06 19.19 V26.16 H67.55 M67.55 25.19 V30.33 M64.64 30.33 H70.65 M65.81 31.49 H69.49 M66.78 32.46 H68.52" stroke="#555" stroke-width="0.38" fill="none"/><circle cx="67.55" cy="21.90" r="3.4" fill="#fbfbf8" stroke="#555" stroke-width="0.4"/><path d="M55.63 76.65 H68.52 V77.81 M58.54 76.65 V85.27 H68.04 M68.04 84.30 V88.47 M65.81 88.47 H70.46 M66.58 89.63 H69.68 M67.36 90.60 H68.91" stroke="#555" stroke-width="0.38" fill="none"/><circle cx="68.04" cy="81.01" r="3.5" fill="#fbfbf8" stroke="#555" stroke-width="0.4"/><path d="M17.84 9.01 L28.02 12.40 L35.28 14.83 M17.84 19.67 H35.28 M17.84 28.10 Q26.08 25.97 34.80 22.58 M17.84 39.53 L29.76 41.47 M17.84 52.33 H37.90 M17.84 68.60 Q28.99 65.70 40.13 63.76 M74.53 42.93 L63.87 47.09 M76.66 56.20 Q72.59 54.07 67.74 52.62" stroke="#4a4a4a" stroke-width="0.42" fill="none"/><text x="9.12" y="8.46" font-family="Liberation Serif,serif" font-size="3.1" fill="#4d4d4d" text-anchor="middle">Magnetic</text><text x="9.41" y="11.76" font-family="Liberation Serif,serif" font-size="3.1" fill="#4d4d4d" text-anchor="middle">Bolts</text><text x="13.00" y="19.12" font-family="Liberation Serif,serif" font-size="3.1" fill="#4d4d4d" text-anchor="middle">Valve</text><text x="11.54" y="22.71" font-family="Liberation Serif,serif" font-size="3.1" fill="#4d4d4d" text-anchor="middle">Structure</text><text x="13.48" y="29.49" font-family="Liberation Serif,serif" font-size="3.1" fill="#4d4d4d" text-anchor="middle">Coil</text><text x="12.03" y="39.67" font-family="Liberation Serif,serif" font-size="3.1" fill="#4d4d4d" text-anchor="middle">Outer</text><text x="11.74" y="43.06" font-family="Liberation Serif,serif" font-size="3.1" fill="#4d4d4d" text-anchor="middle">Cylinder</text><text x="11.54" y="51.78" font-family="Liberation Serif,serif" font-size="3.1" fill="#4d4d4d" text-anchor="middle">Inner</text><text x="11.74" y="55.65" font-family="Liberation Serif,serif" font-size="3.1" fill="#4d4d4d" text-anchor="middle">Cylinder</text><text x="11.06" y="69.70" font-family="Liberation Serif,serif" font-size="3.1" fill="#4d4d4d" text-anchor="middle">MR Fluid</text><text x="77.43" y="21.55" font-family="Liberation Serif,serif" font-size="3.1" fill="#4d4d4d" text-anchor="middle">Current</text><text x="77.43" y="25.13" font-family="Liberation Serif,serif" font-size="3.1" fill="#4d4d4d" text-anchor="middle">Source</text><text x="84.70" y="43.74" font-family="Liberation Serif,serif" font-size="3.1" fill="#4d4d4d" text-anchor="middle">Gas Chamber</text><text x="83.54" y="58.56" font-family="Liberation Serif,serif" font-size="3.1" fill="#4d4d4d" text-anchor="middle">Diaphragm</text><text x="67.55" y="23.39" font-family="Liberation Serif,serif" font-size="3.1" fill="#4d4d4d" text-anchor="middle">A</text><text x="68.04" y="82.50" font-family="Liberation Serif,serif" font-size="3.1" fill="#4d4d4d" text-anchor="middle">A</text></g></g></svg></div>
<div class="key" style="left:740px;top:384px;width:79.5px"></div><div class="abs" style="left:746.10px;top:385px;font-size:14.2px;line-height:16px;letter-spacing:-0.035px;color:#0c66e4;">TECH-001</div>
<div class="jira" style="left:1008px;top:383px;width:96.4px"></div><svg class="abs" style="left:1011px;top:386px" width="16" height="16" viewBox="0 0 16 16"><rect width="16" height="16" rx="2.2" fill="#2684ff"/><rect x="3.95" y="3.95" width="4.4" height="4.4" rx="1" fill="none" stroke="#fff" stroke-width="2.1"/><rect x="6.8" y="6.8" width="6.1" height="6.1" rx="1.2" fill="#fff"/></svg><div class="abs" style="left:1033.10px;top:386px;font-size:14.2px;line-height:16px;letter-spacing:-0.442px;color:#0c66e4;">SCRUM-11</div>
<div class="loz ip" style="left:1352px;top:386px;width:85.6px"></div><div class="abs" style="left:1356.70px;top:388px;font-size:11.3px;line-height:12px;letter-spacing:-0.163px;color:#0055cc;font-weight:bold;">IN PROGRESS</div>
<div class="jira" style="left:1008px;top:419px;width:100.9px"></div><svg class="abs" style="left:1011px;top:422px" width="16" height="16" viewBox="0 0 16 16"><rect width="16" height="16" rx="2.2" fill="#4bae7b"/><path d="M5 3.6h6a.6.6 0 0 1 .6.6v8.2L8 9.6l-3.6 2.8V4.2a.6.6 0 0 1 .6-.6z" fill="#fff"/></svg><div class="abs" style="left:1033.10px;top:422px;font-size:14.2px;line-height:16px;letter-spacing:-0.011px;color:#0c66e4;">SCRUM-29</div>
<div class="loz td" style="left:1352px;top:422px;width:44.8px"></div><div class="abs" style="left:1356.70px;top:424px;font-size:11.3px;line-height:12px;letter-spacing:-0.215px;color:#44546f;font-weight:bold;">TO DO</div>
<div class="jira" style="left:1008px;top:455px;width:100.9px"></div><svg class="abs" style="left:1011px;top:458px" width="16" height="16" viewBox="0 0 16 16"><rect width="16" height="16" rx="2.2" fill="#6554c0"/><path d="M9.9 2 L4.8 8.4 H8.1 L7.2 13.9 L12.2 6.9 H9 Z" fill="#fff"/></svg><div class="abs" style="left:1033.10px;top:458px;font-size:14.2px;line-height:16px;letter-spacing:-0.011px;color:#0c66e4;">SCRUM-30</div>
<div class="loz dn" style="left:1352px;top:458px;width:41.6px"></div><div class="abs" style="left:1356.70px;top:460px;font-size:11.3px;line-height:12px;letter-spacing:-0.162px;color:#1f845a;font-weight:bold;">DONE</div>
<div class="jira" style="left:1008px;top:491px;width:100.0px"></div><svg class="abs" style="left:1011px;top:494px" width="16" height="16" viewBox="0 0 16 16"><rect width="16" height="16" rx="2.2" fill="#6554c0"/><path d="M9.9 2 L4.8 8.4 H8.1 L7.2 13.9 L12.2 6.9 H9 Z" fill="#fff"/></svg><div class="abs" style="left:1033.10px;top:494px;font-size:14.2px;line-height:16px;letter-spacing:-0.124px;color:#0c66e4;">SCRUM-37</div>
<div class="loz ip" style="left:1352px;top:494px;width:85.6px"></div><div class="abs" style="left:1356.70px;top:496px;font-size:11.3px;line-height:12px;letter-spacing:-0.163px;color:#0055cc;font-weight:bold;">IN PROGRESS</div>
<div class="jira" style="left:1008px;top:527px;width:100.9px"></div><svg class="abs" style="left:1011px;top:530px" width="16" height="16" viewBox="0 0 16 16"><rect width="16" height="16" rx="2.2" fill="#4bae7b"/><path d="M5 3.6h6a.6.6 0 0 1 .6.6v8.2L8 9.6l-3.6 2.8V4.2a.6.6 0 0 1 .6-.6z" fill="#fff"/></svg><div class="abs" style="left:1033.10px;top:530px;font-size:14.2px;line-height:16px;letter-spacing:-0.011px;color:#0c66e4;">SCRUM-38</div>
<div class="loz td" style="left:1352px;top:530px;width:44.8px"></div><div class="abs" style="left:1356.70px;top:532px;font-size:11.3px;line-height:12px;letter-spacing:-0.215px;color:#44546f;font-weight:bold;">TO DO</div>

<div class="key" style="left:227px;top:564px;width:61.9px"></div><div class="abs" style="left:233.10px;top:565px;font-size:14.2px;line-height:16px;letter-spacing:0.308px;color:#0c66e4;">FN-005</div>
<div class="abs" style="left:377px;top:563px;width:97px;height:92px"><svg width="97" height="92" viewBox="0 0 97 92" style="display:block"><defs><linearGradient id="sg1_1" x1="0" x2="1"><stop offset="0" stop-color="#787379"/><stop offset="0.13" stop-color="#a7a3a8"/><stop offset="0.28" stop-color="#8e8a8f"/><stop offset="0.8" stop-color="#8c888d"/><stop offset="0.9" stop-color="#9a969b"/><stop offset="1" stop-color="#777278"/></linearGradient><linearGradient id="sg2_1" x1="0" x2="1"><stop offset="0" stop-color="#827d84"/><stop offset="0.35" stop-color="#bebbc0"/><stop offset="1" stop-color="#7c777e"/></linearGradient><filter id="sbl_1" x="-5%" y="-5%" width="110%" height="110%"><feGaussianBlur stdDeviation="0.38"/></filter></defs><g><rect x="0.4" y="0.1" width="96.4" height="91.9" fill="#fbfbf8"/><g filter="url(#sbl_1)"><path d="M27.82 9.50 L27.82 86.53 L32.38 88.28 L41.29 83.43 L50.11 88.28 L55.15 86.53 L55.15 9.50 Z" fill="url(#sg1_1)"/><ellipse cx="41.49" cy="9.50" rx="13.66" ry="3.29" fill="#7f7a80"/><path d="M34.31 15.31 Q41.49 10.47 50.11 14.83 L50.11 86.53 L41.29 82.17 L34.31 86.53Z" fill="#757076"/><path d="M31.41 12.40 Q41.49 8.53 52.24 12.40" fill="none" stroke="#a5a1a6" stroke-width="0.7"/><rect x="35.77" y="25.97" width="3.10" height="43.12" fill="#f1f0f2"/><rect x="44.30" y="25.97" width="3.10" height="43.12" fill="#f1f0f2"/><rect x="38.87" y="25.97" width="5.43" height="29.07" fill="#8f8b90"/><rect x="37.22" y="59.69" width="9.21" height="9.40" fill="#f4f3f5"/><path d="M39.64 63.57 L42.55 62.79 L41.10 64.24Z" fill="#444"/><rect x="38.48" y="54.07" width="6.20" height="5.81" fill="#48444a"/><rect x="40.13" y="1.74" width="2.71" height="53.29" rx="0.8" fill="#5b565c"/><rect x="35.38" y="14.83" width="4.26" height="9.21" rx="0.8" fill="#5e595f" stroke="#e9e8ea" stroke-width="0.5"/><ellipse cx="37.51" cy="19.38" rx="1.07" ry="2.13" fill="#8b878c" stroke="#f1f0f2" stroke-width="0.5"/><rect x="43.33" y="14.83" width="4.26" height="9.21" rx="0.8" fill="#5e595f" stroke="#e9e8ea" stroke-width="0.5"/><ellipse cx="45.46" cy="19.38" rx="1.07" ry="2.13" fill="#8b878c" stroke="#f1f0f2" stroke-width="0.5"/><path d="M34.80 24.52 Q41.49 22.58 48.37 24.52 L47.40 26.45 Q41.49 24.52 35.77 26.45Z" fill="#e4e3e5"/><rect x="40.23" y="13.37" width="2.52" height="14.53" fill="#5b565c"/><rect x="47.88" y="16.96" width="7.75" height="1.74" rx="0.6" fill="#e8e7e9" stroke="#555" stroke-width="0.35"/><path d="M35.77 69.09 Q41.49 66.18 47.40 69.09 L47.40 72.00 Q41.49 69.09 35.77 72.00Z" fill="#47434a"/><rect x="35.57" y="72.97" width="4.26" height="9.69" rx="0.8" fill="#5e595f" stroke="#e9e8ea" stroke-width="0.5"/><ellipse cx="37.71" cy="77.81" rx="1.07" ry="2.13" fill="#8b878c" stroke="#f1f0f2" stroke-width="0.5"/><rect x="43.33" y="72.97" width="4.26" height="9.69" rx="0.8" fill="#5e595f" stroke="#e9e8ea" stroke-width="0.5"/><ellipse cx="45.46" cy="77.81" rx="1.07" ry="2.13" fill="#8b878c" stroke="#f1f0f2" stroke-width="0.5"/><rect x="40.81" y="72.48" width="1.16" height="11.14" fill="#e9e8ea"/><rect x="47.88" y="75.87" width="7.75" height="1.55" rx="0.6" fill="#48444a"/><path d="M57.09 43.41 L57.09 60.85 Q63.19 64.73 69.20 60.85 L69.20 43.41Z" fill="url(#sg2_1)"/><ellipse cx="63.19" cy="43.41" rx="6.06" ry="1.94" fill="#77727a"/><path d="M59.02 45.35 L59.02 52.62 L67.74 52.62 L67.74 45.35 Q63.19 43.41 59.02 45.35Z" fill="#8d898e"/><ellipse cx="63.38" cy="52.62" rx="4.84" ry="1.26" fill="#4a464c"/><path d="M60.48 48.06 L63.87 46.51 L62.12 48.26Z" fill="#333"/><rect x="61.25" y="62.02" width="2.91" height="4.36" fill="#d9d8da" stroke="#77727a" stroke-width="0.4"/><path d="M48.37 64.73 L69.20 67.44 L69.20 71.51 L48.37 67.64Z" fill="#8e8a8f" stroke="#6b666c" stroke-width="0.3"/><path d="M55.63 17.44 H67.55 V18.70 M58.06 19.19 V26.16 H67.55 M67.55 25.19 V30.33 M64.64 30.33 H70.65 M65.81 31.49 H69.49 M66.78 32.46 H68.52" stroke="#555" stroke-width="0.38" fill="none"/><circle cx="67.55" cy="21.90" r="3.4" fill="#fbfbf8" stroke="#555" stroke-width="0.4"/><path d="M55.63 76.65 H68.52 V77.81 M58.54 76.65 V85.27 H68.04 M68.04 84.30 V88.47 M65.81 88.47 H70.46 M66.58 89.63 H69.68 M67.36 90.60 H68.91" stroke="#555" stroke-width="0.38" fill="none"/><circle cx="68.04" cy="81.01" r="3.5" fill="#fbfbf8" stroke="#555" stroke-width="0.4"/><path d="M17.84 9.01 L28.02 12.40 L35.28 14.83 M17.84 19.67 H35.28 M17.84 28.10 Q26.08 25.97 34.80 22.58 M17.84 39.53 L29.76 41.47 M17.84 52.33 H37.90 M17.84 68.60 Q28.99 65.70 40.13 63.76 M74.53 42.93 L63.87 47.09 M76.66 56.20 Q72.59 54.07 67.74 52.62" stroke="#4a4a4a" stroke-width="0.42" fill="none"/><text x="9.12" y="8.46" font-family="Liberation Serif,serif" font-size="3.1" fill="#4d4d4d" text-anchor="middle">Magnetic</text><text x="9.41" y="11.76" font-family="Liberation Serif,serif" font-size="3.1" fill="#4d4d4d" text-anchor="middle">Bolts</text><text x="13.00" y="19.12" font-family="Liberation Serif,serif" font-size="3.1" fill="#4d4d4d" text-anchor="middle">Valve</text><text x="11.54" y="22.71" font-family="Liberation Serif,serif" font-size="3.1" fill="#4d4d4d" text-anchor="middle">Structure</text><text x="13.48" y="29.49" font-family="Liberation Serif,serif" font-size="3.1" fill="#4d4d4d" text-anchor="middle">Coil</text><text x="12.03" y="39.67" font-family="Liberation Serif,serif" font-size="3.1" fill="#4d4d4d" text-anchor="middle">Outer</text><text x="11.74" y="43.06" font-family="Liberation Serif,serif" font-size="3.1" fill="#4d4d4d" text-anchor="middle">Cylinder</text><text x="11.54" y="51.78" font-family="Liberation Serif,serif" font-size="3.1" fill="#4d4d4d" text-anchor="middle">Inner</text><text x="11.74" y="55.65" font-family="Liberation Serif,serif" font-size="3.1" fill="#4d4d4d" text-anchor="middle">Cylinder</text><text x="11.06" y="69.70" font-family="Liberation Serif,serif" font-size="3.1" fill="#4d4d4d" text-anchor="middle">MR Fluid</text><text x="77.43" y="21.55" font-family="Liberation Serif,serif" font-size="3.1" fill="#4d4d4d" text-anchor="middle">Current</text><text x="77.43" y="25.13" font-family="Liberation Serif,serif" font-size="3.1" fill="#4d4d4d" text-anchor="middle">Source</text><text x="84.70" y="43.74" font-family="Liberation Serif,serif" font-size="3.1" fill="#4d4d4d" text-anchor="middle">Gas Chamber</text><text x="83.54" y="58.56" font-family="Liberation Serif,serif" font-size="3.1" fill="#4d4d4d" text-anchor="middle">Diaphragm</text><text x="67.55" y="23.39" font-family="Liberation Serif,serif" font-size="3.1" fill="#4d4d4d" text-anchor="middle">A</text><text x="68.04" y="82.50" font-family="Liberation Serif,serif" font-size="3.1" fill="#4d4d4d" text-anchor="middle">A</text></g></g></svg></div>
<div class="key" style="left:740px;top:564px;width:81.3px"></div><div class="abs" style="left:746.10px;top:565px;font-size:14.2px;line-height:16px;letter-spacing:0.190px;color:#0c66e4;">TECH-005</div>
<div class="jira" style="left:1008px;top:563px;width:101.4px"></div><svg class="abs" style="left:1011px;top:566px" width="16" height="16" viewBox="0 0 16 16"><rect width="16" height="16" rx="2.2" fill="#4bae7b"/><path d="M5 3.6h6a.6.6 0 0 1 .6.6v8.2L8 9.6l-3.6 2.8V4.2a.6.6 0 0 1 .6-.6z" fill="#fff"/></svg><div class="abs" style="left:1033.10px;top:566px;font-size:14.2px;line-height:16px;letter-spacing:0.051px;color:#0c66e4;">SCRUM-34</div>
<div class="loz td" style="left:1352px;top:566px;width:44.8px"></div><div class="abs" style="left:1356.70px;top:568px;font-size:11.3px;line-height:12px;letter-spacing:-0.215px;color:#44546f;font-weight:bold;">TO DO</div>
<div class="key" style="left:227px;top:676px;width:61.9px"></div><div class="abs" style="left:233.10px;top:677px;font-size:14.2px;line-height:16px;letter-spacing:0.308px;color:#0c66e4;">FN-009</div>
<div class="abs" style="left:377px;top:675px;width:97px;height:92px"><svg width="97" height="92" viewBox="0 0 97 92" style="display:block"><defs><linearGradient id="sg1_2" x1="0" x2="1"><stop offset="0" stop-color="#787379"/><stop offset="0.13" stop-color="#a7a3a8"/><stop offset="0.28" stop-color="#8e8a8f"/><stop offset="0.8" stop-color="#8c888d"/><stop offset="0.9" stop-color="#9a969b"/><stop offset="1" stop-color="#777278"/></linearGradient><linearGradient id="sg2_2" x1="0" x2="1"><stop offset="0" stop-color="#827d84"/><stop offset="0.35" stop-color="#bebbc0"/><stop offset="1" stop-color="#7c777e"/></linearGradient><filter id="sbl_2" x="-5%" y="-5%" width="110%" height="110%"><feGaussianBlur stdDeviation="0.38"/></filter></defs><g><rect x="0.4" y="0.1" width="96.4" height="91.9" fill="#fbfbf8"/><g filter="url(#sbl_2)"><path d="M27.82 9.50 L27.82 86.53 L32.38 88.28 L41.29 83.43 L50.11 88.28 L55.15 86.53 L55.15 9.50 Z" fill="url(#sg1_2)"/><ellipse cx="41.49" cy="9.50" rx="13.66" ry="3.29" fill="#7f7a80"/><path d="M34.31 15.31 Q41.49 10.47 50.11 14.83 L50.11 86.53 L41.29 82.17 L34.31 86.53Z" fill="#757076"/><path d="M31.41 12.40 Q41.49 8.53 52.24 12.40" fill="none" stroke="#a5a1a6" stroke-width="0.7"/><rect x="35.77" y="25.97" width="3.10" height="43.12" fill="#f1f0f2"/><rect x="44.30" y="25.97" width="3.10" height="43.12" fill="#f1f0f2"/><rect x="38.87" y="25.97" width="5.43" height="29.07" fill="#8f8b90"/><rect x="37.22" y="59.69" width="9.21" height="9.40" fill="#f4f3f5"/><path d="M39.64 63.57 L42.55 62.79 L41.10 64.24Z" fill="#444"/><rect x="38.48" y="54.07" width="6.20" height="5.81" fill="#48444a"/><rect x="40.13" y="1.74" width="2.71" height="53.29" rx="0.8" fill="#5b565c"/><rect x="35.38" y="14.83" width="4.26" height="9.21" rx="0.8" fill="#5e595f" stroke="#e9e8ea" stroke-width="0.5"/><ellipse cx="37.51" cy="19.38" rx="1.07" ry="2.13" fill="#8b878c" stroke="#f1f0f2" stroke-width="0.5"/><rect x="43.33" y="14.83" width="4.26" height="9.21" rx="0.8" fill="#5e595f" stroke="#e9e8ea" stroke-width="0.5"/><ellipse cx="45.46" cy="19.38" rx="1.07" ry="2.13" fill="#8b878c" stroke="#f1f0f2" stroke-width="0.5"/><path d="M34.80 24.52 Q41.49 22.58 48.37 24.52 L47.40 26.45 Q41.49 24.52 35.77 26.45Z" fill="#e4e3e5"/><rect x="40.23" y="13.37" width="2.52" height="14.53" fill="#5b565c"/><rect x="47.88" y="16.96" width="7.75" height="1.74" rx="0.6" fill="#e8e7e9" stroke="#555" stroke-width="0.35"/><path d="M35.77 69.09 Q41.49 66.18 47.40 69.09 L47.40 72.00 Q41.49 69.09 35.77 72.00Z" fill="#47434a"/><rect x="35.57" y="72.97" width="4.26" height="9.69" rx="0.8" fill="#5e595f" stroke="#e9e8ea" stroke-width="0.5"/><ellipse cx="37.71" cy="77.81" rx="1.07" ry="2.13" fill="#8b878c" stroke="#f1f0f2" stroke-width="0.5"/><rect x="43.33" y="72.97" width="4.26" height="9.69" rx="0.8" fill="#5e595f" stroke="#e9e8ea" stroke-width="0.5"/><ellipse cx="45.46" cy="77.81" rx="1.07" ry="2.13" fill="#8b878c" stroke="#f1f0f2" stroke-width="0.5"/><rect x="40.81" y="72.48" width="1.16" height="11.14" fill="#e9e8ea"/><rect x="47.88" y="75.87" width="7.75" height="1.55" rx="0.6" fill="#48444a"/><path d="M57.09 43.41 L57.09 60.85 Q63.19 64.73 69.20 60.85 L69.20 43.41Z" fill="url(#sg2_2)"/><ellipse cx="63.19" cy="43.41" rx="6.06" ry="1.94" fill="#77727a"/><path d="M59.02 45.35 L59.02 52.62 L67.74 52.62 L67.74 45.35 Q63.19 43.41 59.02 45.35Z" fill="#8d898e"/><ellipse cx="63.38" cy="52.62" rx="4.84" ry="1.26" fill="#4a464c"/><path d="M60.48 48.06 L63.87 46.51 L62.12 48.26Z" fill="#333"/><rect x="61.25" y="62.02" width="2.91" height="4.36" fill="#d9d8da" stroke="#77727a" stroke-width="0.4"/><path d="M48.37 64.73 L69.20 67.44 L69.20 71.51 L48.37 67.64Z" fill="#8e8a8f" stroke="#6b666c" stroke-width="0.3"/><path d="M55.63 17.44 H67.55 V18.70 M58.06 19.19 V26.16 H67.55 M67.55 25.19 V30.33 M64.64 30.33 H70.65 M65.81 31.49 H69.49 M66.78 32.46 H68.52" stroke="#555" stroke-width="0.38" fill="none"/><circle cx="67.55" cy="21.90" r="3.4" fill="#fbfbf8" stroke="#555" stroke-width="0.4"/><path d="M55.63 76.65 H68.52 V77.81 M58.54 76.65 V85.27 H68.04 M68.04 84.30 V88.47 M65.81 88.47 H70.46 M66.58 89.63 H69.68 M67.36 90.60 H68.91" stroke="#555" stroke-width="0.38" fill="none"/><circle cx="68.04" cy="81.01" r="3.5" fill="#fbfbf8" stroke="#555" stroke-width="0.4"/><path d="M17.84 9.01 L28.02 12.40 L35.28 14.83 M17.84 19.67 H35.28 M17.84 28.10 Q26.08 25.97 34.80 22.58 M17.84 39.53 L29.76 41.47 M17.84 52.33 H37.90 M17.84 68.60 Q28.99 65.70 40.13 63.76 M74.53 42.93 L63.87 47.09 M76.66 56.20 Q72.59 54.07 67.74 52.62" stroke="#4a4a4a" stroke-width="0.42" fill="none"/><text x="9.12" y="8.46" font-family="Liberation Serif,serif" font-size="3.1" fill="#4d4d4d" text-anchor="middle">Magnetic</text><text x="9.41" y="11.76" font-family="Liberation Serif,serif" font-size="3.1" fill="#4d4d4d" text-anchor="middle">Bolts</text><text x="13.00" y="19.12" font-family="Liberation Serif,serif" font-size="3.1" fill="#4d4d4d" text-anchor="middle">Valve</text><text x="11.54" y="22.71" font-family="Liberation Serif,serif" font-size="3.1" fill="#4d4d4d" text-anchor="middle">Structure</text><text x="13.48" y="29.49" font-family="Liberation Serif,serif" font-size="3.1" fill="#4d4d4d" text-anchor="middle">Coil</text><text x="12.03" y="39.67" font-family="Liberation Serif,serif" font-size="3.1" fill="#4d4d4d" text-anchor="middle">Outer</text><text x="11.74" y="43.06" font-family="Liberation Serif,serif" font-size="3.1" fill="#4d4d4d" text-anchor="middle">Cylinder</text><text x="11.54" y="51.78" font-family="Liberation Serif,serif" font-size="3.1" fill="#4d4d4d" text-anchor="middle">Inner</text><text x="11.74" y="55.65" font-family="Liberation Serif,serif" font-size="3.1" fill="#4d4d4d" text-anchor="middle">Cylinder</text><text x="11.06" y="69.70" font-family="Liberation Serif,serif" font-size="3.1" fill="#4d4d4d" text-anchor="middle">MR Fluid</text><text x="77.43" y="21.55" font-family="Liberation Serif,serif" font-size="3.1" fill="#4d4d4d" text-anchor="middle">Current</text><text x="77.43" y="25.13" font-family="Liberation Serif,serif" font-size="3.1" fill="#4d4d4d" text-anchor="middle">Source</text><text x="84.70" y="43.74" font-family="Liberation Serif,serif" font-size="3.1" fill="#4d4d4d" text-anchor="middle">Gas Chamber</text><text x="83.54" y="58.56" font-family="Liberation Serif,serif" font-size="3.1" fill="#4d4d4d" text-anchor="middle">Diaphragm</text><text x="67.55" y="23.39" font-family="Liberation Serif,serif" font-size="3.1" fill="#4d4d4d" text-anchor="middle">A</text><text x="68.04" y="82.50" font-family="Liberation Serif,serif" font-size="3.1" fill="#4d4d4d" text-anchor="middle">A</text></g></g></svg></div>

<svg class="abs" style="left:79.4px;top:791.7px" width="8" height="10"><path d="M2 1.9 L5.4 5 L2 8.1" fill="none" stroke="#172b4d" stroke-width="1.9" stroke-linecap="round" stroke-linejoin="round"/></svg><div class="key" style="left:96px;top:788px;width:61.9px"></div><div class="abs" style="left:102.10px;top:789px;font-size:14.2px;line-height:16px;letter-spacing:0.175px;color:#0c66e4;">BR-002</div>
<div class="key" style="left:227px;top:788px;width:61.9px"></div><div class="abs" style="left:233.10px;top:789px;font-size:14.2px;line-height:16px;letter-spacing:0.308px;color:#0c66e4;">FN-002</div>
<div class="abs" style="left:370px;top:780px;width:240px;height:120px"><svg width="240" height="120" viewBox="0 0 240 120" style="display:block"><defs><pattern id="jh" width="24" height="24" patternUnits="userSpaceOnUse" patternTransform="rotate(-62)"><rect width="24" height="24" fill="#fff"/><rect width="24" height="9" fill="#222"/></pattern><filter id="jbl" x="-2%" y="-2%" width="104%" height="104%"><feGaussianBlur stdDeviation="2.2"/></filter></defs><g transform="scale(0.13605)" filter="url(#jbl)" fill="none" stroke="#0a0a0a" stroke-linecap="round" stroke-linejoin="round"><path d="M170 308 C230 288 290 274 340 270 L1050 262 C1250 268 1480 318 1612 372 L1600 384 C1470 335 1250 280 1050 274 L340 282 C290 286 230 298 170 308Z" fill="#0a0a0a" stroke-width="4"/><path d="M175 650 C240 668 300 676 340 678 L1000 672 C1250 660 1480 610 1612 548 L1600 538 C1470 596 1250 646 1000 660 L340 666 C300 664 240 658 175 650Z" fill="#0a0a0a" stroke-width="4"/><path d="M308 398 C240 410 180 435 150 470 C180 505 240 530 308 542" stroke-width="6"/><rect x="305" y="292" width="26" height="366" fill="url(#jh)" stroke-width="5"/><rect x="365" y="292" width="26" height="366" fill="url(#jh)" stroke-width="5"/><rect x="430" y="292" width="26" height="366" fill="url(#jh)" stroke-width="5"/><rect x="492" y="292" width="26" height="366" fill="url(#jh)" stroke-width="5"/><rect x="552" y="292" width="26" height="366" fill="url(#jh)" stroke-width="5"/><rect x="338" y="278" width="19" height="92" fill="#0a0a0a" stroke="none"/><rect x="400" y="278" width="19" height="92" fill="#0a0a0a" stroke="none"/><rect x="465" y="278" width="19" height="92" fill="#0a0a0a" stroke="none"/><rect x="528" y="278" width="19" height="92" fill="#0a0a0a" stroke="none"/><rect x="339" y="566" width="24" height="100" fill="#fff" stroke-width="6"/><rect x="339" y="610" width="24" height="56" fill="#0a0a0a" stroke="none"/><rect x="401" y="566" width="24" height="100" fill="#fff" stroke-width="6"/><rect x="401" y="610" width="24" height="56" fill="#0a0a0a" stroke="none"/><rect x="465" y="566" width="24" height="100" fill="#fff" stroke-width="6"/><rect x="465" y="610" width="24" height="56" fill="#0a0a0a" stroke="none"/><rect x="527" y="566" width="24" height="100" fill="#fff" stroke-width="6"/><rect x="527" y="610" width="24" height="56" fill="#0a0a0a" stroke="none"/><path d="M330 372 H560 M330 562 H560" stroke-width="7"/><path d="M575 378 L655 366 C670 366 680 384 700 386 L930 380 C960 372 985 355 1000 345" stroke-width="14"/><path d="M575 565 L655 578 C670 578 680 558 700 554 L930 556 C960 566 985 580 1000 592" stroke-width="14"/><path d="M578 455 H985 M578 497 H985 M578 410 V540" stroke-width="5"/><path d="M985 350 V590" stroke-width="5"/><rect x="1002" y="282" width="32" height="370" fill="url(#jh)" stroke-width="5"/><path d="M1036 396 C1250 408 1430 440 1550 466 C1430 496 1250 535 1036 546" stroke-width="6"/><path d="M1085 332 C1250 340 1480 380 1640 428" stroke-width="5" stroke-dasharray="150 28"/><path d="M1130 612 C1300 590 1500 545 1640 500" stroke-width="5" stroke-dasharray="150 28"/><path d="M1615 412 L1655 432 L1612 440Z M1612 490 L1655 496 L1622 520Z" fill="#0a0a0a" stroke-width="2"/><path d="M1585 362 L1618 374 L1604 390Z M1585 556 L1618 544 L1604 532Z" fill="#0a0a0a" stroke-width="3"/><rect x="594" y="272" width="14" height="48" fill="#fff" stroke-width="4"/><rect x="644" y="258" width="14" height="34" fill="#fff" stroke-width="4"/><rect x="604" y="632" width="12" height="44" fill="#fff" stroke-width="4"/><rect x="650" y="650" width="14" height="36" fill="#fff" stroke-width="4"/><path d="M615 318 C650 300 700 310 735 335 M800 300 C850 285 900 290 935 300 M880 300 C905 320 915 345 905 365 M740 368 C790 372 825 355 835 318" stroke-width="4.5" stroke-dasharray="34 14"/><path d="M615 622 C640 615 655 622 665 640 M670 640 C700 625 730 612 760 612 M740 580 C790 575 820 595 835 632 M790 640 C830 652 880 650 935 640 M880 640 C905 620 915 600 915 585" stroke-width="4.5" stroke-dasharray="34 14"/><path d="M135 380 L255 338 M135 575 L262 614 M200 236 L215 330 M215 700 L292 490" stroke-width="4" stroke-dasharray="20 12"/><path d="M232 336 L262 334 L244 356Z" fill="#0a0a0a" stroke-width="2"/><path d="M556 166 L600 268 M705 180 L660 255 M1110 156 L1046 256" stroke-width="4"/><path d="M716 736 L736 682 M1540 690 L1566 600" stroke-width="4" stroke-dasharray="18 10"/></g><g style="filter:blur(0.25px)"><text x="48.98" y="20.41" font-family="Liberation Sans,sans-serif" font-size="7.8" font-weight="normal" fill="#111" stroke="#111" stroke-width="0.22" textLength="37.41" lengthAdjust="spacingAndGlyphs">FUEL SPRAY</text><text x="97.96" y="21.77" font-family="Liberation Sans,sans-serif" font-size="7.8" font-weight="normal" fill="#111" stroke="#111" stroke-width="0.22" textLength="23.81" lengthAdjust="spacingAndGlyphs">IGNITER</text><text x="141.50" y="19.73" font-family="Liberation Sans,sans-serif" font-size="7.8" font-weight="normal" fill="#111" stroke="#111" stroke-width="0.22" textLength="25.17" lengthAdjust="spacingAndGlyphs">TURBINE</text><text x="18.37" y="29.93" font-family="Liberation Sans,sans-serif" font-size="7.8" font-weight="normal" fill="#111" stroke="#111" stroke-width="0.22" textLength="35.37" lengthAdjust="spacingAndGlyphs">AIR INTAKE</text><text x="27.21" y="102.99" font-family="Liberation Sans,sans-serif" font-size="7.8" font-weight="normal" fill="#111" stroke="#111" stroke-width="0.22" textLength="42.86" lengthAdjust="spacingAndGlyphs">COMPRESSOR</text><text x="82.31" y="107.21" font-family="Liberation Sans,sans-serif" font-size="8.6" font-weight="bold" fill="#111" stroke="#111" stroke-width="0.22" textLength="88.44" lengthAdjust="spacingAndGlyphs">COMBUSTION CHAMBER</text><text x="189.80" y="100.00" font-family="Liberation Sans,sans-serif" font-size="7.8" font-weight="normal" fill="#111" stroke="#111" stroke-width="0.22" textLength="24.90" lengthAdjust="spacingAndGlyphs">NOZZLE</text></g></svg></div>
<div class="key" style="left:740px;top:788px;width:79.5px"></div><div class="abs" style="left:746.10px;top:789px;font-size:14.2px;line-height:16px;letter-spacing:-0.035px;color:#0c66e4;">TECH-001</div>
<div class="jira" style="left:1008px;top:787px;width:96.4px"></div><svg class="abs" style="left:1011px;top:790px" width="16" height="16" viewBox="0 0 16 16"><rect width="16" height="16" rx="2.2" fill="#2684ff"/><rect x="3.95" y="3.95" width="4.4" height="4.4" rx="1" fill="none" stroke="#fff" stroke-width="2.1"/><rect x="6.8" y="6.8" width="6.1" height="6.1" rx="1.2" fill="#fff"/></svg><div class="abs" style="left:1033.10px;top:790px;font-size:14.2px;line-height:16px;letter-spacing:-0.442px;color:#0c66e4;">SCRUM-11</div>
<div class="loz ip" style="left:1352px;top:790px;width:85.6px"></div><div class="abs" style="left:1356.70px;top:792px;font-size:11.3px;line-height:12px;letter-spacing:-0.163px;color:#0055cc;font-weight:bold;">IN PROGRESS</div>
<div class="jira" style="left:1008px;top:823px;width:100.9px"></div><svg class="abs" style="left:1011px;top:826px" width="16" height="16" viewBox="0 0 16 16"><rect width="16" height="16" rx="2.2" fill="#4bae7b"/><path d="M5 3.6h6a.6.6 0 0 1 .6.6v8.2L8 9.6l-3.6 2.8V4.2a.6.6 0 0 1 .6-.6z" fill="#fff"/></svg><div class="abs" style="left:1033.10px;top:826px;font-size:14.2px;line-height:16px;letter-spacing:-0.011px;color:#0c66e4;">SCRUM-29</div>
<div class="loz td" style="left:1352px;top:826px;width:44.8px"></div><div class="abs" style="left:1356.70px;top:828px;font-size:11.3px;line-height:12px;letter-spacing:-0.215px;color:#44546f;font-weight:bold;">TO DO</div>
<div class="jira" style="left:1008px;top:859px;width:100.9px"></div><svg class="abs" style="left:1011px;top:862px" width="16" height="16" viewBox="0 0 16 16"><rect width="16" height="16" rx="2.2" fill="#6554c0"/><path d="M9.9 2 L4.8 8.4 H8.1 L7.2 13.9 L12.2 6.9 H9 Z" fill="#fff"/></svg><div class="abs" style="left:1033.10px;top:862px;font-size:14.2px;line-height:16px;letter-spacing:-0.011px;color:#0c66e4;">SCRUM-30</div>
<div class="loz dn" style="left:1352px;top:862px;width:41.6px"></div><div class="abs" style="left:1356.70px;top:864px;font-size:11.3px;line-height:12px;letter-spacing:-0.162px;color:#1f845a;font-weight:bold;">DONE</div>
<div class="jira" style="left:1008px;top:895px;width:100.0px"></div><svg class="abs" style="left:1011px;top:898px" width="16" height="16" viewBox="0 0 16 16"><rect width="16" height="16" rx="2.2" fill="#6554c0"/><path d="M9.9 2 L4.8 8.4 H8.1 L7.2 13.9 L12.2 6.9 H9 Z" fill="#fff"/></svg><div class="abs" style="left:1033.10px;top:898px;font-size:14.2px;line-height:16px;letter-spacing:-0.124px;color:#0c66e4;">SCRUM-37</div>
<div class="loz ip" style="left:1352px;top:898px;width:85.6px"></div><div class="abs" style="left:1356.70px;top:900px;font-size:11.3px;line-height:12px;letter-spacing:-0.163px;color:#0055cc;font-weight:bold;">IN PROGRESS</div>
<div class="jira" style="left:1008px;top:931px;width:100.9px"></div><svg class="abs" style="left:1011px;top:934px" width="16" height="16" viewBox="0 0 16 16"><rect width="16" height="16" rx="2.2" fill="#4bae7b"/><path d="M5 3.6h6a.6.6 0 0 1 .6.6v8.2L8 9.6l-3.6 2.8V4.2a.6.6 0 0 1 .6-.6z" fill="#fff"/></svg><div class="abs" style="left:1033.10px;top:934px;font-size:14.2px;line-height:16px;letter-spacing:-0.011px;color:#0c66e4;">SCRUM-38</div>
<div class="loz td" style="left:1352px;top:934px;width:44.8px"></div><div class="abs" style="left:1356.70px;top:936px;font-size:11.3px;line-height:12px;letter-spacing:-0.215px;color:#44546f;font-weight:bold;">TO DO</div>
<div class="key" style="left:740px;top:968px;width:81.3px"></div><div class="abs" style="left:746.10px;top:969px;font-size:14.2px;line-height:16px;letter-spacing:0.190px;color:#0c66e4;">TECH-002</div>
<div class="jira" style="left:1008px;top:967px;width:99.2px"></div><svg class="abs" style="left:1011px;top:970px" width="16" height="16" viewBox="0 0 16 16"><rect width="16" height="16" rx="2.2" fill="#4bae7b"/><path d="M5 3.6h6a.6.6 0 0 1 .6.6v8.2L8 9.6l-3.6 2.8V4.2a.6.6 0 0 1 .6-.6z" fill="#fff"/></svg><div class="abs" style="left:1033.10px;top:970px;font-size:14.2px;line-height:16px;letter-spacing:-0.224px;color:#0c66e4;">SCRUM-31</div>
<div class="loz td" style="left:1352px;top:970px;width:44.8px"></div><div class="abs" style="left:1356.70px;top:972px;font-size:11.3px;line-height:12px;letter-spacing:-0.215px;color:#44546f;font-weight:bold;">TO DO</div>
<div class="jira" style="left:1008px;top:1003px;width:100.0px"></div><svg class="abs" style="left:1011px;top:1006px" width="16" height="16" viewBox="0 0 16 16"><rect width="16" height="16" rx="2.2" fill="#6554c0"/><path d="M9.9 2 L4.8 8.4 H8.1 L7.2 13.9 L12.2 6.9 H9 Z" fill="#fff"/></svg><div class="abs" style="left:1033.10px;top:1006px;font-size:14.2px;line-height:16px;letter-spacing:-0.124px;color:#0c66e4;">SCRUM-37</div>
<div class="loz ip" style="left:1352px;top:1006px;width:85.6px"></div><div class="abs" style="left:1356.70px;top:1008px;font-size:11.3px;line-height:12px;letter-spacing:-0.163px;color:#0055cc;font-weight:bold;">IN PROGRESS</div>

</div>
</body>
</html>
